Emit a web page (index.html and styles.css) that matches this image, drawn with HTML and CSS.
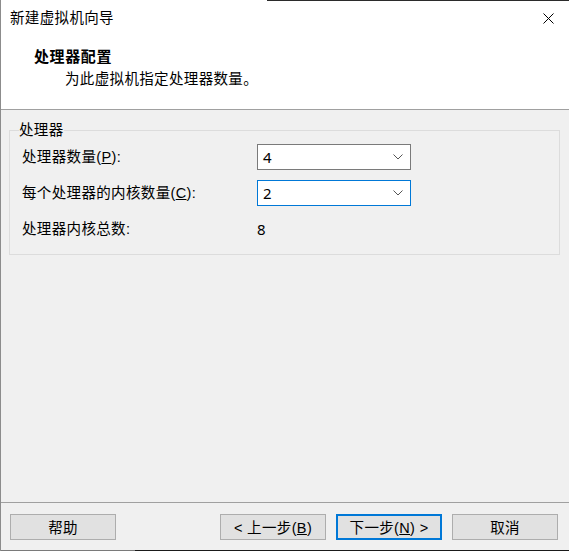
FILE: index.html
```html
<!DOCTYPE html>
<html lang="zh-CN">
<head>
    <meta charset="UTF-8">
    <meta name="viewport" content="width=device-width, initial-scale=1.0">
    <title>新建虚拟机向导</title>
    <link rel="stylesheet" href="styles.css">
</head>
<body>
  <div class="window">
    <div class="edge-top"></div>
    <div class="top">
      <div class="titlebar">
        <span class="title">新建虚拟机向导</span>
        <svg class="close" width="11" height="11" viewBox="0 0 11 11">
          <path d="M0.5 0.5 L10.5 10.5 M10.5 0.5 L0.5 10.5" stroke="#000" stroke-width="1" fill="none"/>
        </svg>
      </div>
      <div class="header">
        <div class="heading">处理器配置</div>
        <div class="subtitle">为此虚拟机指定处理器数量。</div>
      </div>
    </div>

    <div class="main">
      <fieldset class="group">
        <legend>处理器</legend>
        <div class="row">
          <label class="label">处理器数量(<u>P</u>):</label>
          <div class="select">
            <span>4</span>
            <svg width="10" height="6" viewBox="0 0 10 6"><path d="M0.5 0.5 L5 5 L9.5 0.5" stroke="#555" fill="none"/></svg>
          </div>
        </div>
        <div class="row">
          <label class="label">每个处理器的内核数量(<u>C</u>):</label>
          <div class="select focused">
            <span>2</span>
            <svg width="10" height="6" viewBox="0 0 10 6"><path d="M0.5 0.5 L5 5 L9.5 0.5" stroke="#555" fill="none"/></svg>
          </div>
        </div>
        <div class="row">
          <span class="label">处理器内核总数:</span>
          <span class="value">8</span>
        </div>
      </fieldset>
    </div>

    <div class="footer">
      <button class="btn">帮助</button>
      <div class="nav">
        <button class="btn">&lt; 上一步(<u>B</u>)</button>
        <button class="btn default">下一步(<u>N</u>) &gt;</button>
        <button class="btn">取消</button>
      </div>
    </div>
    <div class="edge-bottom"></div>
  </div>
</body>
</html>
```

FILE: styles.css
```css
*{
    box-sizing: border-box;
}
body{
    margin: 0;
    font-family: "Liberation Sans", "Noto Sans CJK SC", sans-serif;
    font-size: 14.5px;
    letter-spacing: 0.35px;
    color: #000;
}
.window{
    width: 569px;
    height: 551px;
    display: flex;
    flex-direction: column;
    border-left: 1px solid #8c8c8c;
    background-color: #f0f0f0;
}
.edge-top{
    height: 1px;
    background: linear-gradient(to right, #ffffff 266px, #2b2b2b 266px);
}
.edge-bottom{
    height: 1px;
    background: linear-gradient(to right, #7a7a7a 134px, #1a1a1a 134px);
}
.top{
    height: 109px;
    background-color: #fff;
    border-bottom: 1px solid #a0a0a0;
}
.titlebar{
    height: 34px;
    display: flex;
    align-items: center;
    justify-content: space-between;
    padding-left: 9px;
    padding-right: 15px;
}
.title{
    line-height: 34px;
}
.close{
    display: block;
}
.header{
    padding-top: 12px;
}
.heading{
    font-weight: bold;
    font-size: 15px;
    letter-spacing: 0.6px;
    line-height: 20px;
    padding-left: 33px;
}
.subtitle{
    line-height: 20px;
    margin-top: 2px;
    padding-left: 64px;
}
.main{
    flex: 1;
    padding: 10px 9px 0 8px;
}
.group{
    margin: 0;
    padding: 0 0 12px 0;
    border: 1px solid #dcdcdc;
    min-width: 0;
}
.group legend{
    margin-left: 9px;
    padding: 0;
    line-height: 20px;
}
.row{
    display: flex;
    align-items: center;
    height: 26px;
    margin-top: 10px;
    padding-left: 12px;
}
.row:first-of-type{
    margin-top: 4px;
}
.label{
    width: 235px;
    line-height: 20px;
}
.select{
    width: 154px;
    height: 26px;
    display: flex;
    align-items: center;
    justify-content: space-between;
    padding: 0 7px 0 5px;
    background-color: #fff;
    border: 1px solid #7a7a7a;
    font-family: "Noto Sans", sans-serif;
    font-size: 15px;
}
.select.focused{
    border-color: #0078d7;
}
.value{
    font-family: "Noto Sans", sans-serif;
    font-size: 15px;
}
.footer{
    height: 48px;
    display: flex;
    align-items: center;
    justify-content: space-between;
    padding: 0 11px 0 9px;
    border-top: 1px solid #a0a0a0;
}
.nav{
    display: flex;
    gap: 10px;
}
.btn{
    width: 106px;
    height: 26px;
    padding: 0;
    font-family: inherit;
    font-size: 14.5px;
    letter-spacing: inherit;
    color: #000;
    background-color: #e1e1e1;
    border: 1px solid #adadad;
}
.btn.default{
    border: 2px solid #0078d7;
}
```
